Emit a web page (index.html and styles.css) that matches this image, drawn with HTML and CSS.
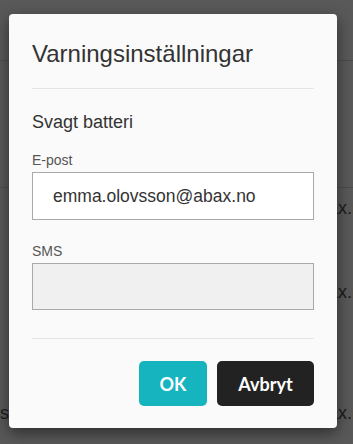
FILE: index.html
```html
<!DOCTYPE html>
<html lang="sv">
<head>
<meta charset="utf-8">
<title>Varningsinställningar</title>
<link rel="stylesheet" href="styles.css">
</head>
<body>
<main class="page">
  <header class="page-head"></header>
  <section class="page-band"></section>
  <div class="page-row row-1"><span class="cell-left"></span><span class="cell-right">abax.no</span></div>
  <div class="page-row row-2"><span class="cell-left"></span><span class="cell-right">abax.no</span></div>
  <div class="page-row row-3"><span class="cell-left">s</span><span class="cell-right">abax.no</span></div>
</main>

<div class="modal">
  <h1 class="modal-title">Varningsinställningar</h1>
  <hr class="sep">
  <h2 class="section-title">Svagt batteri</h2>
  <label class="field-label">E-post</label>
  <div class="input">emma.olovsson@abax.no</div>
  <label class="field-label field-label-2">SMS</label>
  <div class="input input-disabled"></div>
  <hr class="sep sep-2">
  <div class="actions">
    <button class="btn btn-ok">OK</button>
    <button class="btn btn-cancel">Avbryt</button>
  </div>
</div>
</body>
</html>
```
FILE: styles.css
```css
* { box-sizing: border-box; }
html, body {
  margin: 0;
  padding: 0;
  width: 353px;
  height: 444px;
  overflow: hidden;
}
body {
  background: #595959;
  font-family: "Liberation Sans", Arial, sans-serif;
  position: relative;
}
.page {
  display: flex;
  flex-direction: column;
}
.page-head {
  height: 61px;
  border-bottom: 1px solid #4c4c4c;
}
.page-band {
  height: 127px;
  border-bottom: 1px solid #4c4c4c;
}
.page-row {
  display: grid;
  grid-template-columns: 9px 299px 1fr;
  height: 40px;
  align-items: center;
  font-size: 18px;
  color: #1c1c1c;
  white-space: nowrap;
  overflow: hidden;
}
.page-row .cell-right { grid-column: 3; }
.page-row .cell-left { grid-column: 1; }
.row-1 { margin-top: 0; }
.row-2 { margin-top: 44px; }
.row-3 { margin-top: 81px; }

.modal {
  position: absolute;
  left: 9px;
  top: 14px;
  width: 328px;
  height: 414px;
  background: #fafafa;
  border-radius: 4px;
  box-shadow: 0 5px 15px rgba(0,0,0,0.5);
  padding: 26px 23px 22px 23px;
  display: flex;
  flex-direction: column;
}
.modal-title {
  margin: 0;
  font-size: 24px;
  line-height: 28px;
  font-weight: normal;
  color: #333;
}
.sep {
  margin: 20px 0 0 0;
  border: 0;
  border-top: 1px solid #e5e5e5;
  height: 0;
}
.section-title {
  margin: 22px 0 0 0;
  font-size: 18px;
  line-height: 22px;
  font-weight: normal;
  color: #333;
}
.field-label {
  display: block;
  margin-top: 19px;
  font-size: 14px;
  line-height: 17px;
  color: #555;
}
.field-label-2 { margin-top: 23px; }
.input {
  margin-top: 3px;
  height: 48px;
  border: 1px solid #a9a9a9;
  background: #fff;
  padding: 0 20px;
  display: flex;
  align-items: center;
  font-size: 17.5px;
  color: #333;
}
.input-disabled {
  background: #f0f0f0;
  height: 47px;
}
.sep-2 { margin-top: 28px; }
.actions {
  margin-top: 22px;
  display: flex;
  justify-content: flex-end;
  gap: 10px;
}
.btn {
  height: 45px;
  border: 0;
  border-radius: 5px;
  padding: 0;
  font-family: Lato, "Liberation Sans", sans-serif;
  font-weight: 700;
  font-size: 18px;
  color: #fff;
}
.btn-ok { background: #15b4bf; width: 68px; }
.btn-cancel { background: #222; width: 97px; }
```
